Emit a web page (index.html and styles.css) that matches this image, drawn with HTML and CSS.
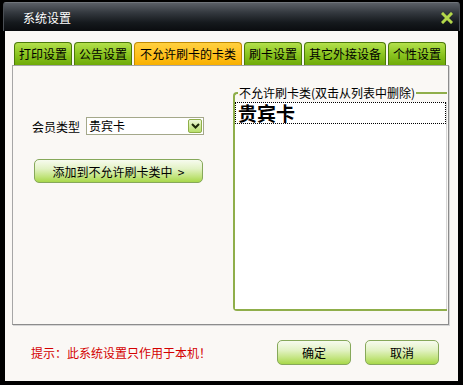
FILE: index.html
```html
<!DOCTYPE html>
<html lang="zh-CN">
<head>
    <meta charset="UTF-8">
    <meta name="viewport" content="width=device-width, initial-scale=1.0">
    <title>系统设置</title>
    <link rel="stylesheet" href="styles.css">
</head>
<body>
    <div class="window">
        <div class="titlebar">
            <span class="title">系统设置</span>
            <svg class="close" width="12" height="12" viewBox="0 0 12 12">
                <path d="M2 2 L10 10 M10 2 L2 10" stroke="#b4d84a" stroke-width="3" stroke-linecap="square"/>
            </svg>
        </div>
        <div class="content">
            <div class="tabs">
                <div class="tab">打印设置</div>
                <div class="tab">公告设置</div>
                <div class="tab active">不允许刷卡的卡类</div>
                <div class="tab">刷卡设置</div>
                <div class="tab">其它外接设备</div>
                <div class="tab">个性设置</div>
            </div>
            <div class="panel">
                <div class="left">
                    <div class="field">
                        <label>会员类型</label>
                        <div class="select">
                            <span class="select-text">贵宾卡</span>
                            <span class="select-arrow">
                                <svg width="9" height="6" viewBox="0 0 9 6">
                                    <path d="M1 1 L4.5 4.5 L8 1" stroke="#1d2a08" stroke-width="2" fill="none"/>
                                </svg>
                            </span>
                        </div>
                    </div>
                    <button class="btn btn-add">添加到不允许刷卡类中 &nbsp;&gt;</button>
                </div>
                <fieldset class="group">
                    <legend>不允许刷卡类(双击从列表中删除)</legend>
                    <div class="list">
                        <div class="item">贵宾卡</div>
                    </div>
                </fieldset>
            </div>
            <div class="footer">
                <span class="hint">提示：此系统设置只作用于本机！</span>
                <div class="actions">
                    <button class="btn btn-action">确定</button>
                    <button class="btn btn-action">取消</button>
                </div>
            </div>
        </div>
    </div>
</body>
</html>
```

FILE: styles.css
```css
body {
    margin: 0;
    background-color: #000;
    font-family: "Noto Sans CJK SC", "Liberation Sans", sans-serif;
    font-size: 12px;
}

.window {
    width: 463px;
    height: 385px;
    display: flex;
    flex-direction: column;
}

.titlebar {
    height: 28px;
    margin: 2px 3px 0 3px;
    border-top: 1px solid #70757b;
    border-left: 1px solid #4a4f55;
    border-right: 1px solid #4a4f55;
    border-radius: 3px 3px 0 0;
    background: linear-gradient(#5a5f66 0%, #33383e 35%, #15191d 70%, #0a0c0f 100%);
    display: flex;
    align-items: center;
    justify-content: space-between;
    padding: 0 6px 0 19px;
    color: #fff;
}

.title {
    font-size: 12px;
}

.close {
    margin-top: 1px;
}

.content {
    height: 350px;
    margin: 0 5px;
    background-color: #faf8f5;
    padding: 11px 9px 0 7px;
    box-sizing: border-box;
}

.tabs {
    display: flex;
    gap: 2px;
    padding-left: 2px;
    height: 23px;
}

.tab {
    height: 23px;
    line-height: 22px;
    padding: 0 4px;
    border: 1px solid #4b7a08;
    border-bottom: none;
    border-radius: 4px 4px 0 0;
    background: linear-gradient(#b4e04c 0%, #8cc622 50%, #6eaa08 100%);
    box-sizing: border-box;
    color: #000;
}

.tab.active {
    border-color: #c08a00;
    background: linear-gradient(#ffd040 0%, #ffbf1a 60%, #f8b000 100%);
    padding: 0 5px;
}

.panel {
    height: 260px;
    border: 1px solid #a6a6a6;
    border-right-color: #8c8c8c;
    border-bottom-color: #8c8c8c;
    box-shadow: 1px 1px 0 #d6d6d6;
    box-sizing: border-box;
    display: flex;
}

.left {
    width: 220px;
    padding: 51px 0 0 19px;
    box-sizing: border-box;
}

.field {
    display: flex;
    align-items: center;
    gap: 6px;
}

.select {
    width: 118px;
    height: 18px;
    border: 1px solid #a4a88a;
    background-color: #fff;
    box-sizing: border-box;
    display: flex;
    align-items: center;
    justify-content: space-between;
    padding: 0 1px 0 2px;
}

.select-text {
    line-height: 16px;
}

.select-arrow {
    width: 14px;
    height: 14px;
    border: 1px solid #8fae48;
    border-radius: 2px;
    background: linear-gradient(#eef8da, #b8e06a);
    box-sizing: border-box;
    display: flex;
    align-items: center;
    justify-content: center;
}

.btn {
    font-family: inherit;
    font-size: 12px;
    color: #000;
    border: 1px solid #86a85a;
    border-radius: 5px;
    background: linear-gradient(#f7fbef 0%, #e2f2c4 40%, #c2e47e 75%, #a8d84a 100%);
    cursor: pointer;
    padding: 0;
}

.btn-add {
    width: 169px;
    height: 24px;
    margin: 24px 0 0 2px;
}

.group {
    margin: 20px 1px 0 0;
    padding: 2px 0 0 0;
    height: 225px;
    flex: 1;
    border: 2px solid #8fae4a;
    border-right: none;
    border-radius: 4px 0 0 4px;
    box-sizing: border-box;
    display: flex;
    flex-direction: column;
}

.group legend {
    margin-left: 3px;
    padding: 0 1px;
    line-height: 14px;
    font-size: 12px;
}

.list {
    flex: 1;
    background-color: #fff;
    border-right: 1px solid #d8d8d8;
}

.item {
    height: 22px;
    line-height: 20px;
    border: 1px dotted #000;
    box-sizing: border-box;
    padding-left: 2px;
    font-size: 19px;
    font-weight: 700;
}

.footer {
    display: flex;
    align-items: center;
    justify-content: space-between;
    padding: 15px 10px 0 19px;
}

.hint {
    color: #d40000;
}

.actions {
    display: flex;
    gap: 14px;
}

.btn-action {
    width: 74px;
    height: 25px;
}
```
